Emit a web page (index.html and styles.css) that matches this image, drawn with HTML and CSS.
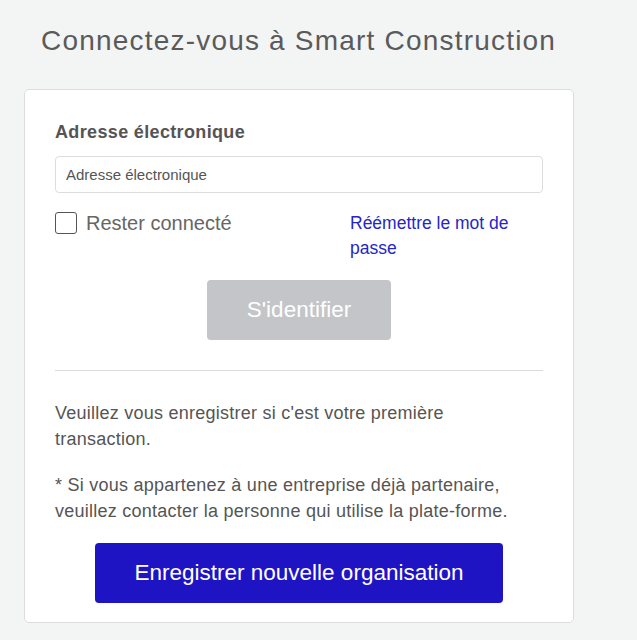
FILE: index.html
```html
<!DOCTYPE html>
<html lang="fr">
<head>
<meta charset="utf-8">
<title>Connexion</title>
<link rel="stylesheet" href="styles.css">
</head>
<body>
<main class="page">
  <h1 class="title">Connectez-vous à Smart Construction</h1>
  <section class="card">
    <form class="login">
      <label class="label" for="email">Adresse électronique</label>
      <input class="input" id="email" type="text" placeholder="Adresse électronique">
      <div class="options">
        <label class="remember"><span class="checkbox"></span><span>Rester connecté</span></label>
        <a class="link" href="#">Réémettre le mot de passe</a>
      </div>
      <div class="center">
        <button class="btn btn-disabled" type="button">S'identifier</button>
      </div>
    </form>
    <hr class="divider">
    <p class="text">Veuillez vous enregistrer si c'est votre première transaction.</p>
    <p class="text">* Si vous appartenez à une entreprise déjà partenaire, veuillez contacter la personne qui utilise la plate-forme.</p>
    <div class="center">
      <button class="btn btn-primary" type="button">Enregistrer nouvelle organisation</button>
    </div>
  </section>
</main>
</body>
</html>
```
FILE: styles.css
```css
* { box-sizing: border-box; }
html, body { margin: 0; padding: 0; }
body {
  background: #f3f4f4;
  font-family: "Liberation Sans", Arial, sans-serif;
  color: #555;
}
.page {
  padding: 0 0 0 24px;
  width: 574px;
}
.title {
  margin: 0;
  padding: 24px 0 0 17px;
  height: 89px;
  font-size: 28px;
  font-weight: normal;
  letter-spacing: 1.2px;
  line-height: 34px;
  white-space: nowrap;
  color: #5a5a5a;
}
.card {
  background: #fff;
  border: 1px solid #dcdcdc;
  border-radius: 5px;
  padding: 29px 30px 19px;
}
.login { display: flex; flex-direction: column; }
.label {
  font-size: 18px;
  letter-spacing: 0.35px;
  font-weight: bold;
  line-height: 26px;
  color: #555;
}
.input {
  margin-top: 11px;
  height: 37px;
  border: 1px solid #dcdde0;
  border-radius: 4px;
  padding: 0 10px;
  font-family: inherit;
  font-size: 15px;
  color: #555;
}
.input::placeholder { color: #555; }
.options {
  display: grid;
  grid-template-columns: 1fr 193px;
  margin-top: 18px;
}
.remember {
  display: flex;
  align-items: flex-start;
  gap: 9px;
  font-size: 20px;
  line-height: 24px;
  color: #666;
}
.checkbox {
  width: 22px;
  height: 22px;
  border: 1.5px solid #555;
  border-radius: 3px;
  flex: none;
  margin-top: 1px;
}
.link {
  font-size: 17.5px;
  line-height: 25px;
  color: #2626c6;
  text-decoration: none;
}
.center { display: flex; justify-content: center; }
.btn {
  height: 60px;
  border: none;
  border-radius: 4px;
  font-family: inherit;
  font-size: 22.5px;
  color: #fff;
}
.btn-disabled {
  margin-top: 19px;
  width: 184px;
  background: #c4c5c9;
}
.btn-primary {
  margin-top: 19px;
  width: 408px;
  background: #1f14c4;
}
.divider {
  margin: 30px 0 0;
  border: none;
  border-top: 1px solid #dcdcdc;
}
.text {
  margin: 29px 0 0;
  font-size: 18px;
  letter-spacing: 0.25px;
  line-height: 26px;
  color: #555;
}
.text + .text { margin-top: 20px; }
```
